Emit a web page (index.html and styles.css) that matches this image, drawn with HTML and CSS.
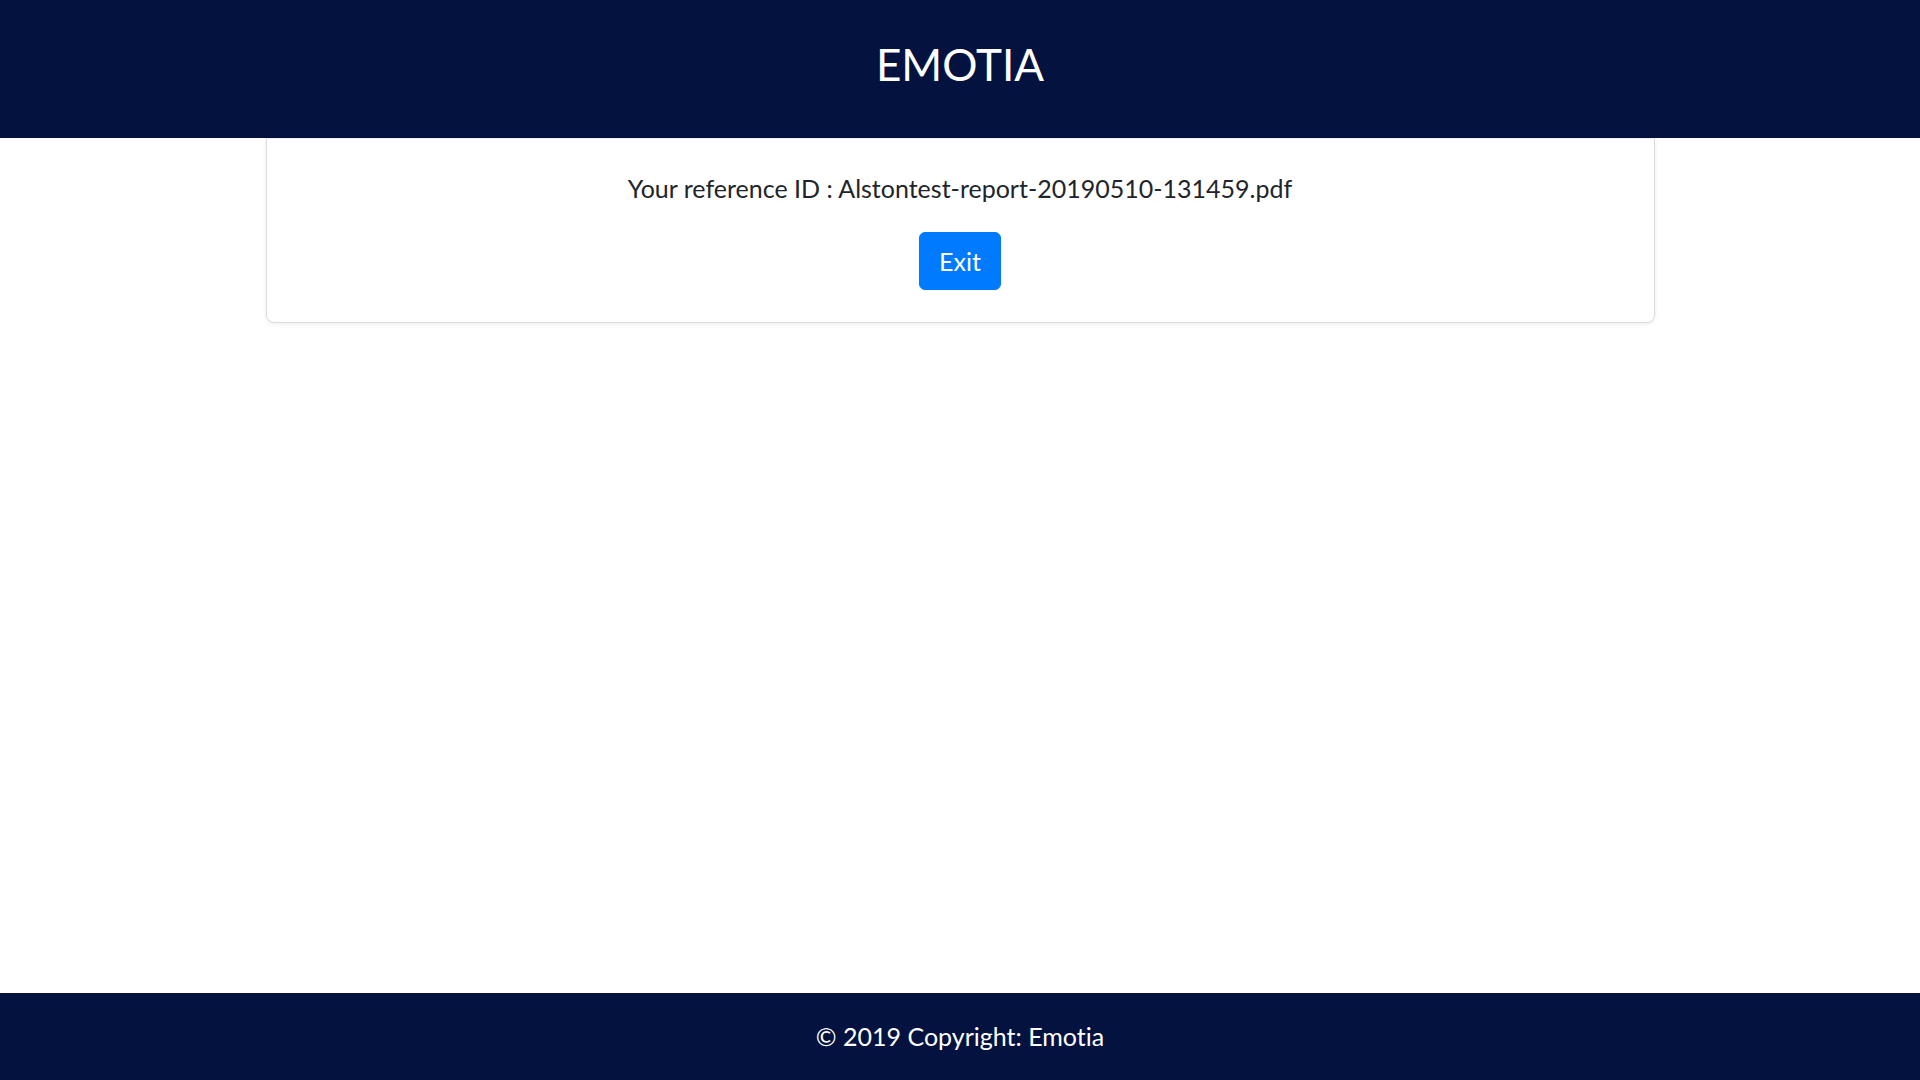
FILE: index.html
```html
<!DOCTYPE html>
<html lang="en">
<head>
<meta charset="utf-8">
<title>EMOTIA</title>
<link rel="stylesheet" href="styles.css">
</head>
<body>
<header class="topbar">
  <h1 class="brand">EMOTIA</h1>
</header>
<main class="content">
  <section class="card">
    <p class="ref">Your reference ID : Alstontest-report-20190510-131459.pdf</p>
    <button class="btn-exit" type="button">Exit</button>
  </section>
</main>
<footer class="footer">© 2019 Copyright: Emotia</footer>
</body>
</html>
```
FILE: styles.css
```css
html, body {
  margin: 0;
  padding: 0;
  height: 100%;
}
body {
  font-family: Lato, "Open Sans", sans-serif;
  font-variant-ligatures: no-common-ligatures;
  color: #212529;
  background: #fff;
  display: flex;
  flex-direction: column;
  min-height: 100vh;
}
.topbar {
  background: #03123f;
  height: 138px;
  display: flex;
  justify-content: center;
  align-items: flex-start;
}
.brand {
  margin: 0;
  padding-top: 38px;
  font-weight: 400;
  font-size: 44px;
  line-height: 52px;
  color: #fff;
}
.content {
  flex: 1;
  display: flex;
  flex-direction: column;
  align-items: center;
}
.card {
  box-sizing: border-box;
  width: 1389px;
  border: 1px solid #dcdcdc;
  border-top-color: #eee;
  border-radius: 0 0 8px 8px;
  box-shadow: 0 1px 4px rgba(0, 0, 0, 0.08);
  padding: 31px 20px 32px;
  display: flex;
  flex-direction: column;
  align-items: center;
}
.ref {
  margin: 0 0 26px;
  font-size: 25px;
  line-height: 36px;
}
.btn-exit {
  font-family: Lato, "Open Sans", sans-serif;
  font-variant-ligatures: no-common-ligatures;
  font-size: 25px;
  line-height: 36px;
  padding: 10px 19px;
  color: #fff;
  background: #007bff;
  border: 1px solid #007bff;
  border-radius: 6px;
  cursor: pointer;
}
.footer {
  background: #03123f;
  color: #fff;
  height: 87px;
  box-sizing: border-box;
  padding-bottom: 2px;
  display: flex;
  align-items: center;
  justify-content: center;
  font-size: 25px;
}
```
